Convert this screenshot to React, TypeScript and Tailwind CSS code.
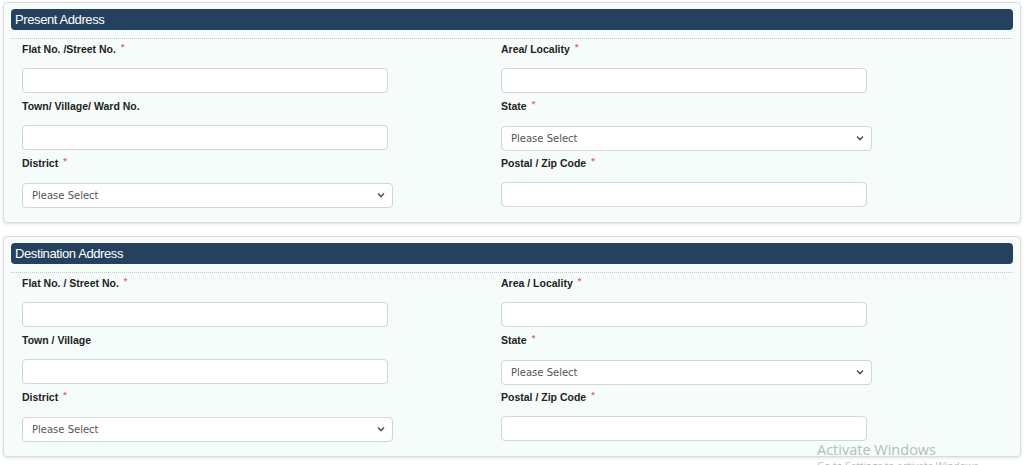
import React from "react";

const Req = () => <span className="ml-[5px] text-[9px] relative -top-[3px] text-[#e86a6a]">*</span>;

function Label({ text, req }: { text: string; req?: boolean }) {
  return (
    <div className="relative top-[1px] h-[14px] leading-[14px] text-[10.5px] font-bold text-[#222]">
      {text}
      {req && <Req />}
    </div>
  );
}

function TextInput() {
  return <input type="text" className="mt-[13px] block h-[25px] w-[366px] rounded-[4px] border border-[#d4d4d4] bg-white" />;
}

function Select() {
  return (
    <div className="relative mt-[13px] h-[25px] w-[371px]">
      <select className="h-full w-full appearance-none rounded-[4px] border border-[#d4d4d4] bg-white pl-[9px] text-[10px] text-[#555] outline-none" style={{ fontFamily: "'DejaVu Sans', Verdana, sans-serif" }}>
        <option>Please Select</option>
      </select>
      <svg className="pointer-events-none absolute right-[8px] top-[10px]" width="8" height="6" viewBox="0 0 8 6">
        <path d="M1 1.5 L4 4.5 L7 1.5" fill="none" stroke="#555" strokeWidth="1.6" />
      </svg>
    </div>
  );
}

type Field = { label: string; req?: boolean; kind: "input" | "select" };

function Card({ title, left, right }: { title: string; left: Field[]; right: Field[] }) {
  const col = (fields: Field[]) => (
    <div className="flex flex-col gap-[5px]">
      {fields.map((f, i) => (
        <div key={i}>
          <Label text={f.label} req={f.req} />
          {f.kind === "input" ? <TextInput /> : <Select />}
        </div>
      ))}
    </div>
  );
  return (
    <div className="rounded-[4px] border border-[#dcdcdc] bg-[#f5fcfa] px-[7px] pt-[6px] pb-[15px] shadow-[0_1px_3px_rgba(0,0,0,0.12)]">
      <div className="h-[21px] rounded-[4px] bg-[#24425f] pl-[4px] text-[13px] leading-[21px] tracking-[-0.4px] text-white">{title}</div>
      <div className="mt-[8px] border-t border-dotted border-[#c8c8c8]" />
      <div className="mt-[2px] grid grid-cols-[479px_1fr] pl-[11px]">
        {col(left)}
        {col(right)}
      </div>
    </div>
  );
}

export default function App() {
  return (
    <div className="relative h-[465px] w-[1024px] overflow-hidden bg-white pl-[3px] pr-[3px] pt-[2px]" style={{ fontFamily: "'Liberation Sans', Arial, sans-serif" }}>
      <Card
        title="Present Address"
        left={[
          { label: "Flat No. /Street No.", req: true, kind: "input" },
          { label: "Town/ Village/ Ward No.", kind: "input" },
          { label: "District", req: true, kind: "select" },
        ]}
        right={[
          { label: "Area/ Locality", req: true, kind: "input" },
          { label: "State", req: true, kind: "select" },
          { label: "Postal / Zip Code", req: true, kind: "input" },
        ]}
      />
      <div className="mt-[13px]">
        <Card
          title="Destination Address"
          left={[
            { label: "Flat No. / Street No.", req: true, kind: "input" },
            { label: "Town / Village", kind: "input" },
            { label: "District", req: true, kind: "select" },
          ]}
          right={[
            { label: "Area / Locality", req: true, kind: "input" },
            { label: "State", req: true, kind: "select" },
            { label: "Postal / Zip Code", req: true, kind: "input" },
          ]}
        />
      </div>
      <div className="pointer-events-none absolute left-[817px] top-[441px] text-[14.5px] leading-[18px] text-[#b8bcbc]" style={{ fontFamily: "'Open Sans', sans-serif" }}>
        Activate Windows
        <div className="text-[10px] leading-[14px]">Go to Settings to activate Windows.</div>
      </div>
    </div>
  );
}
